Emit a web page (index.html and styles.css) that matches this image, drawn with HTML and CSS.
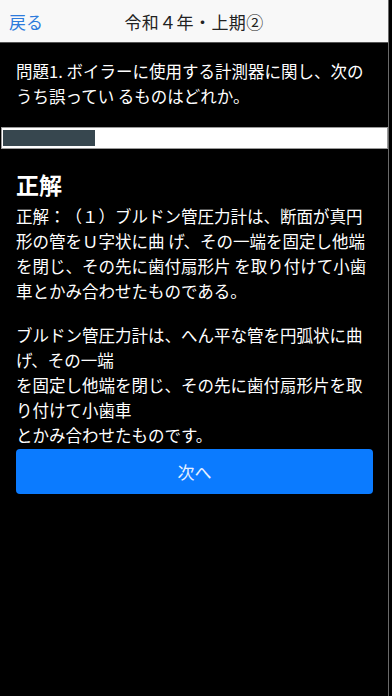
FILE: index.html
```html
<!DOCTYPE html>
<html lang="ja">
<head>
<meta charset="utf-8">
<title>令和４年・上期②</title>
<link rel="stylesheet" href="styles.css">
</head>
<body>
<div class="app">
  <header class="topbar">
    <a class="back">戻る</a>
    <div class="title">令和４年・上期②</div>
    <span></span>
  </header>
  <section class="question">問題1. ボイラーに使用する計測器に関し、次のうち誤ってい るものはどれか。</section>
  <div class="progress"><div class="fill" style="width: 92px"></div></div>
  <section class="answer">
    <h2 class="heading">正解</h2>
    <p class="para1">正解：（１）ブルドン管圧力計は、断面が真円形の管をＵ字状に曲 げ、その一端を固定し他端を閉じ、その先に歯付扇形片 を取り付けて小歯車とかみ合わせたものである。</p>
    <p class="para2">ブルドン管圧力計は、へん平な管を円弧状に曲げ、その一端<br>を固定し他端を閉じ、その先に歯付扇形片を取り付けて小歯車<br>とかみ合わせたものです。</p>
  </section>
  <button class="next">次へ</button>
</div>
</body>
</html>
```
FILE: styles.css
```css
html, body {
  margin: 0;
  padding: 0;
  background: #000;
}
body {
  font-family: "Noto Sans CJK JP", "Noto Sans", sans-serif;
  color: #fff;
  text-spacing-trim: space-all;
}
.app {
  width: 389px;
  min-height: 696px;
  border-right: 1px solid #6a6a6a;
  box-sizing: border-box;
  background: #000;
}
.topbar {
  height: 42px;
  background: #f8f8f8;
  border-bottom: 1px solid #555;
  display: grid;
  grid-template-columns: 1fr auto 1fr;
  align-items: center;
}
.back {
  color: #2d7bdc;
  font-size: 17px;
  padding-left: 9px;
}
.title {
  color: #222;
  font-size: 17px;
  letter-spacing: 0.4px;
}
.question {
  padding: 16px 16px 0;
  font-size: 16.5px;
  line-height: 25px;
  color: #fff;
}
.progress {
  margin-top: 18px;
  margin-left: 1px;
  width: 387px;
  box-sizing: border-box;
  height: 22px;
  background: #fff;
  border: 1px solid #9a9a9a;
  padding: 2px 1px;
}
.fill {
  height: 16px;
  background: #37474f;
}
.answer {
  padding: 0 16px;
}
.heading {
  margin: 21px 0 0;
  font-size: 23px;
  line-height: 28px;
  font-weight: 700;
}
.para1, .para2 {
  font-size: 16.5px;
  line-height: 25px;
  margin: 0;
}
.para1 {
  margin-top: 6px;
}
.para2 {
  margin-top: 19px;
}
.next {
  display: block;
  margin: 1px 16px 0;
  width: 357px;
  height: 45px;
  border: none;
  border-radius: 4px;
  background: #0b7bff;
  color: #e6f0ff;
  font-family: "Noto Sans CJK JP", sans-serif;
  font-size: 17px;
}
```
